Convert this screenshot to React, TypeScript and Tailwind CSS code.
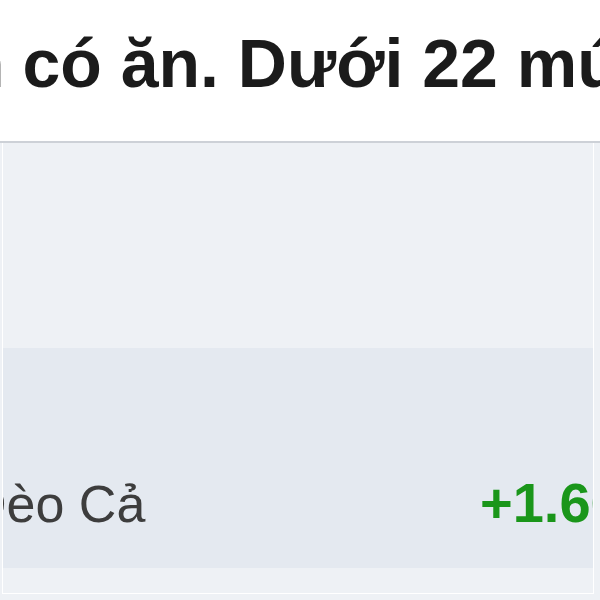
export default function App() {
  return (
    <div className="h-[600px] w-[600px] overflow-hidden bg-white font-['Liberation_Sans',Arial,sans-serif]">
      {/* headline, cropped on both sides */}
      <div className="h-[141px] overflow-hidden whitespace-nowrap pt-[29px] text-[68px] font-bold leading-none text-[#1b1b1b]">
        <div className="-ml-[37px]">
          <span className="-mr-[1px] inline-block">h</span> có ăn. Dưới 22 múi giờ
        </div>
      </div>
      <div className="h-[2px] bg-[#cdd1d7]" />

      <div className="bg-[#eef1f5] pl-[2px] pr-[6px] pb-[6px]">
        <div className="border-x border-b border-white bg-[#eef1f5]">
          <div className="h-[205px]" />
          <div className="flex h-[220px] items-start overflow-hidden whitespace-nowrap bg-[#e4e9f0] pt-[130px] text-[52px] leading-none">
            <div className="-ml-[34px] w-[511px] shrink-0 text-[#3d3d3d]">Đèo Cả</div>
            <div className="text-[56px] -mt-[3px] font-bold text-[#1a961a]">+1.600</div>
          </div>
          <div className="h-[25px]" />
        </div>
      </div>
    </div>
  );
}
